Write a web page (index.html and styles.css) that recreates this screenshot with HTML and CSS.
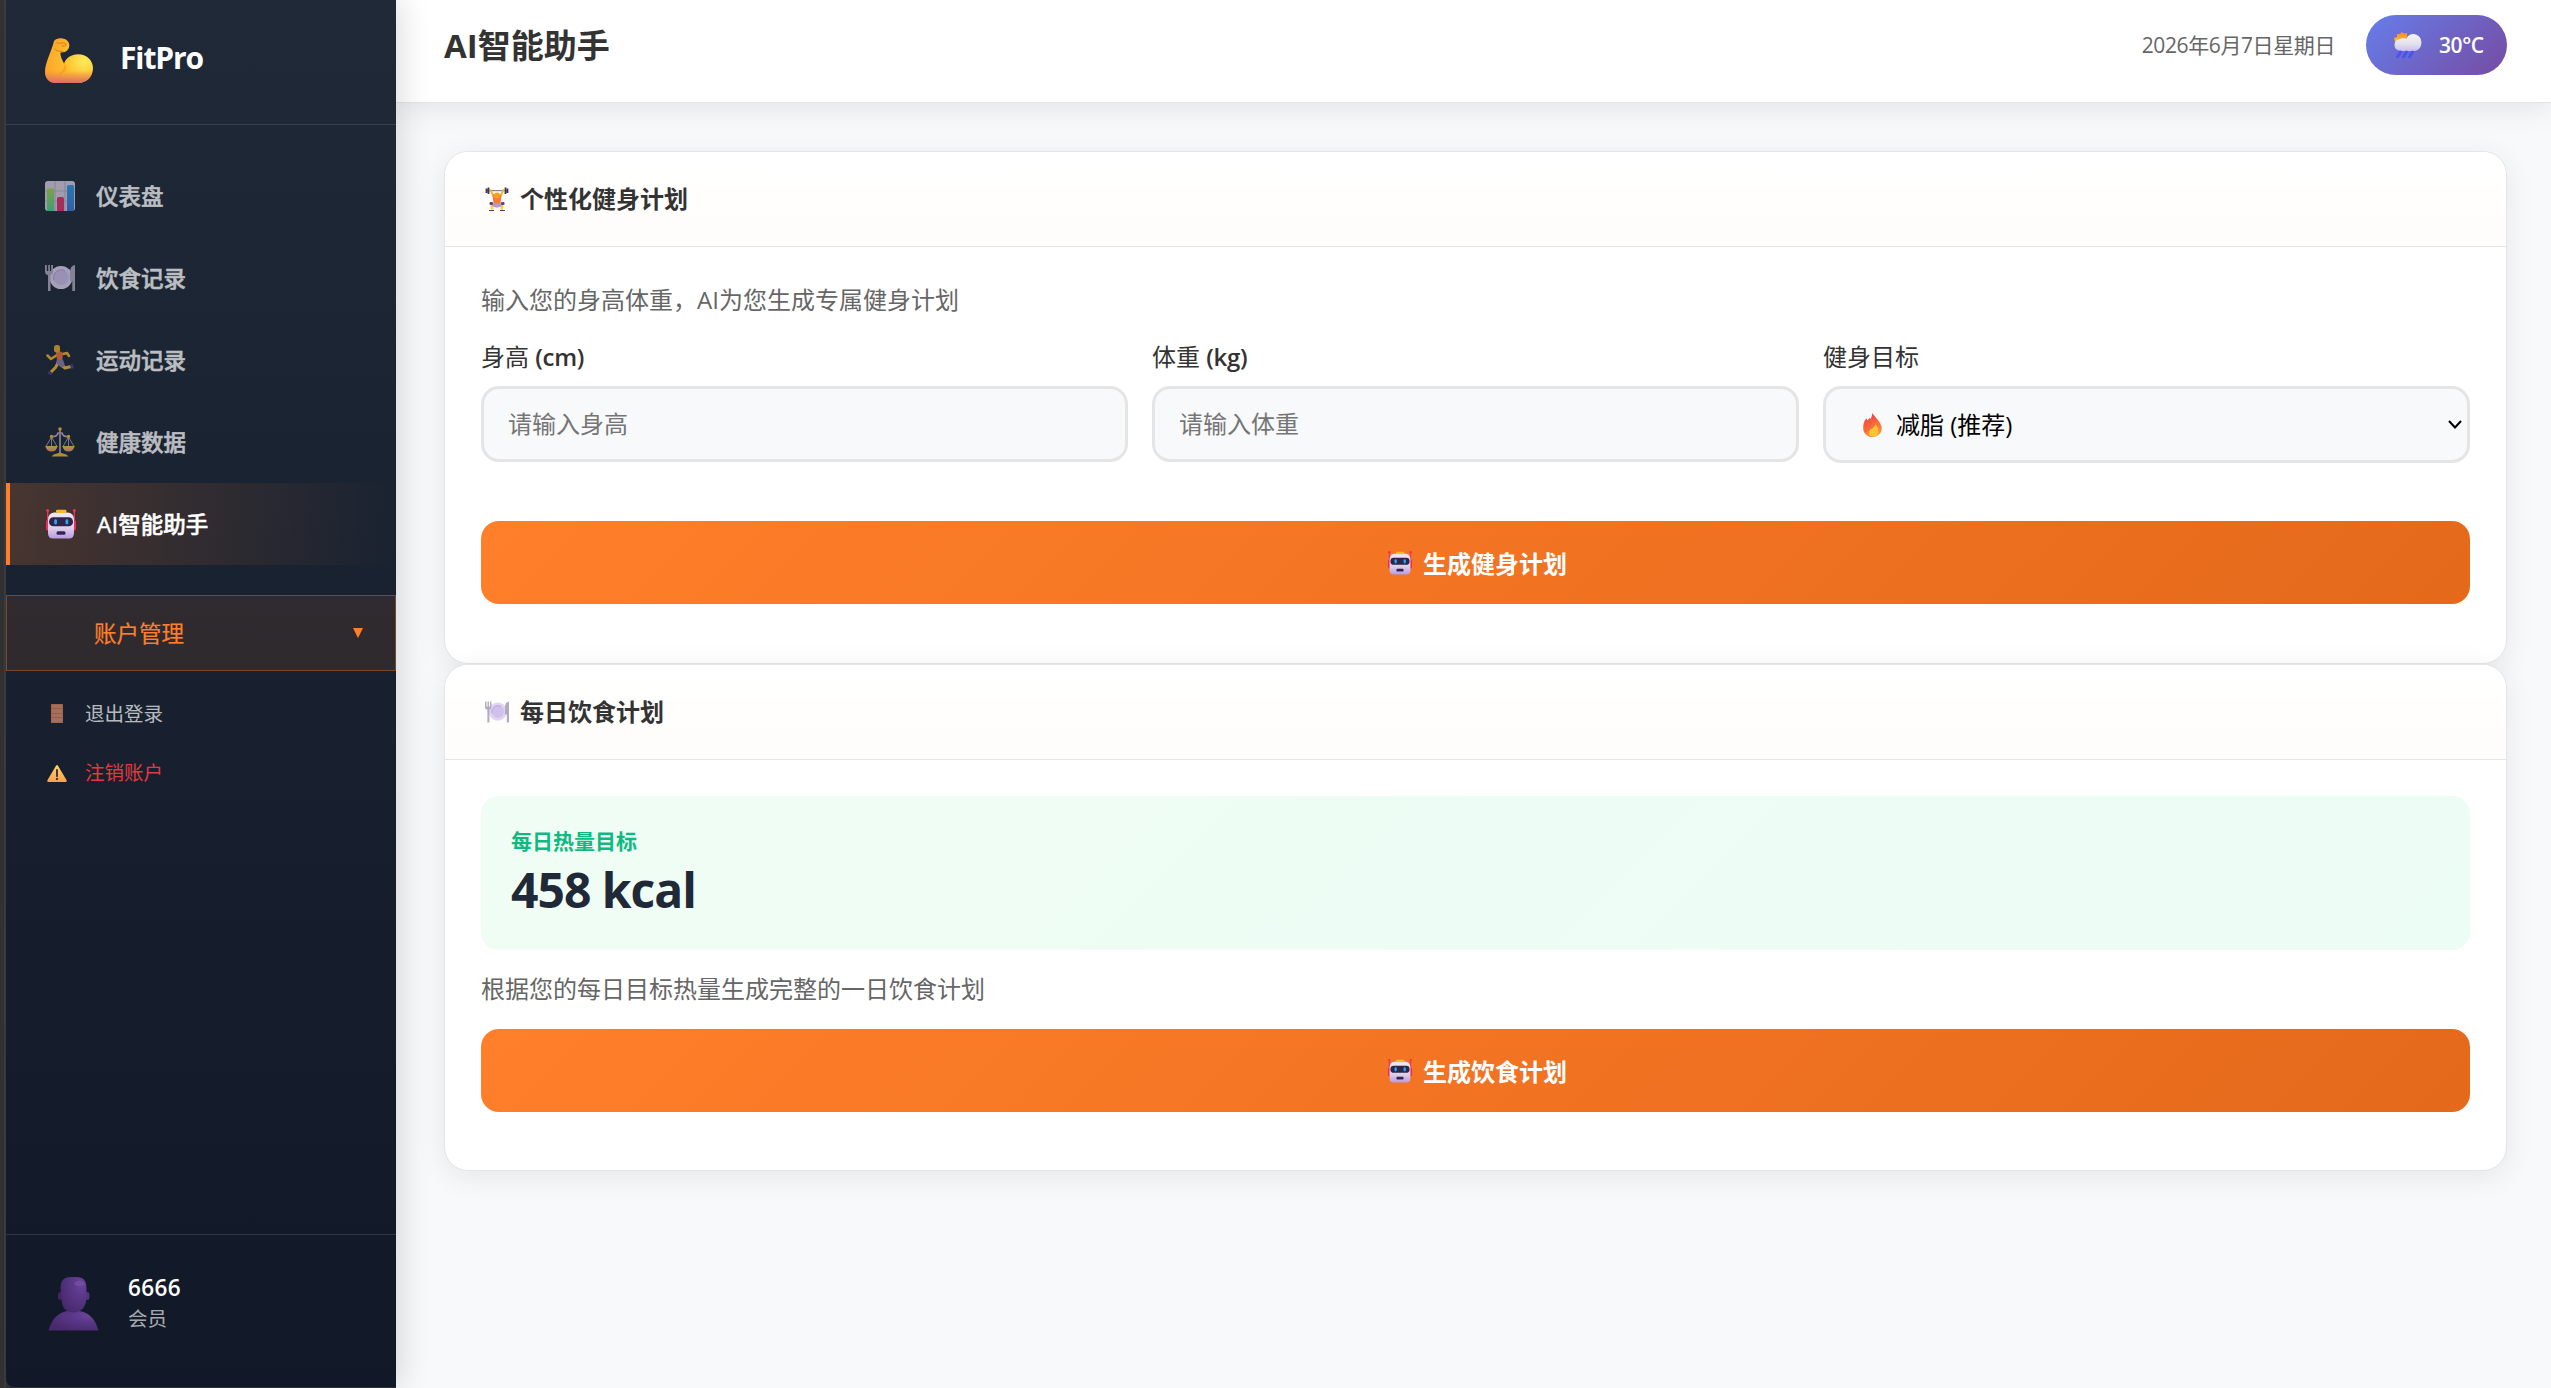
FILE: index.html
```html
<!DOCTYPE html>
<html lang="zh-CN">
<head>
<meta charset="utf-8">
<title>FitPro</title>
<link rel="stylesheet" href="styles.css">
</head>
<body>
<svg class="sprite" aria-hidden="true">
  <defs>
    <radialGradient id="gArm" cx=".82" cy=".5" r=".8"><stop offset="0" stop-color="#ffec5a"/><stop offset=".5" stop-color="#ffc02e"/><stop offset="1" stop-color="#fda52c"/></radialGradient>
    <linearGradient id="gArmLow" x1="0" y1="0" x2="0" y2="1"><stop offset=".72" stop-color="#e8785a" stop-opacity="0"/><stop offset="1" stop-color="#d96d68"/></linearGradient>
    <linearGradient id="gGreen" x1="0" y1="0" x2="0" y2="1"><stop offset="0" stop-color="#a5d64c"/><stop offset="1" stop-color="#4fd292"/></linearGradient>
    <linearGradient id="gBlue" x1="0" y1="0" x2="0" y2="1"><stop offset="0" stop-color="#2e9be6"/><stop offset="1" stop-color="#3a78d8"/></linearGradient>
    <linearGradient id="gFace" x1="0" y1="0" x2="0" y2="1"><stop offset="0" stop-color="#f0e8f4"/><stop offset=".6" stop-color="#ddd0ea"/><stop offset="1" stop-color="#b99adf"/></linearGradient>
    <linearGradient id="gFire" x1=".3" y1="0" x2=".7" y2="1"><stop offset="0" stop-color="#f2363e"/><stop offset=".55" stop-color="#f9713c"/><stop offset="1" stop-color="#ff9a3c"/></linearGradient>
    <linearGradient id="gWarn" x1="0" y1="0" x2="0" y2="1"><stop offset="0" stop-color="#ffd75c"/><stop offset="1" stop-color="#ff9f50"/></linearGradient>
    <linearGradient id="gPan" x1="0" y1="0" x2="0" y2="1"><stop offset="0" stop-color="#f5c748"/><stop offset="1" stop-color="#e8917c"/></linearGradient>
    <radialGradient id="gPerson" cx=".8" cy=".2" r=".9"><stop offset="0" stop-color="#6b4499"/><stop offset=".4" stop-color="#5a3889"/><stop offset="1" stop-color="#48296c"/></radialGradient>
    <linearGradient id="gCloud" x1="0" y1="0" x2="0" y2="1"><stop offset="0" stop-color="#f6f6f8"/><stop offset=".6" stop-color="#e2e0ea"/><stop offset="1" stop-color="#c9bdf2"/></linearGradient>
    <linearGradient id="gSun" x1="0" y1="0" x2="0" y2="1"><stop offset="0" stop-color="#f58a2a"/><stop offset="1" stop-color="#ffc83a"/></linearGradient>
    <radialGradient id="gPlate"><stop offset="0" stop-color="#d5c8ec"/><stop offset="1" stop-color="#e2d8f2"/></radialGradient>
  </defs>

  <symbol id="arm" viewBox="0 0 48 45">
    <path id="armShape" d="M9 3C11 .5 15-.3 18.500.8C22 1.500 24.500 4.500 24.300 7.500C24 11.500 21.500 14 18 14.300L15.500 14.500C15 17 16.500 21 19 25.500C21 20 26.500 16.300 33 16.300C41.500 16.300 48 22.500 48 30C48 38.500 42 45 33 45H11C4.500 45 0 40.500 0 34C0 24 6.500 14 9 3Z" fill="url(#gArm)"/>
    <path d="M19 25.500C20 28 19.500 31 13 37C20 35 24 31 19.500 25Z" fill="#f89d20" opacity=".7"/>
    <path d="M9 3C11 .5 15-.3 18.500.8C22 1.500 24.500 4.500 24.300 7.500C24 11.500 21.500 14 18 14.300L15.500 14.500C15 17 16.500 21 19 25.500C21 20 26.500 16.300 33 16.300C41.500 16.300 48 22.500 48 30C48 38.500 42 45 33 45H11C4.500 45 0 40.500 0 34C0 24 6.500 14 9 3Z" fill="url(#gArmLow)"/>
    <path d="M12 4.500C15 7 17.500 3.500 20.500 5.500C22 7 20 8.500 17 8M10 11C12 14 15 13 18 13.500" fill="none" stroke="#e58a17" stroke-width="1.300" stroke-linecap="round"/>
  </symbol>

  <symbol id="chart" viewBox="0 0 30 30">
    <rect width="30" height="30" rx="3" fill="#d9cfe2"/>
    <path d="M10 0V30M20 0V30M0 10H30M0 20H30" stroke="#b8aec4" stroke-width="1"/>
    <path d="M2 9Q2 7.500 3.500 7.500H7.500Q9 7.500 9 9V30H2Z" fill="url(#gGreen)"/>
    <path d="M12 18Q12 16 13.500 16H17.500Q19 16 19 18V30H12Z" fill="#e0316b"/>
    <path d="M22 5.500Q22 4 23.500 4H27.500Q29 4 29 5.500V30H22Z" fill="url(#gBlue)"/>
  </symbol>

  <symbol id="dish" viewBox="0 0 30 30">
    <circle cx="16" cy="14.500" r="11.500" fill="url(#gPlate)"/>
    <circle cx="16" cy="14.500" r="7.600" fill="#cfc0ec"/>
    <path d="M9 17A7.600 7.600 0 0 1 20 8" fill="none" stroke="#b9a6dc" stroke-width="1.200"/>
    <path d="M0 2V8Q0 12 3 12V28H5.500V12Q8 11.500 8 8V2H6.200V8H4.900V2H3.200V8H1.800V2Z" fill="#b3a9bf"/>
    <path d="M30 2Q25 3 25 9V18H27.300V28H30Z" fill="#b3a9bf"/>
  </symbol>

  <symbol id="runner" viewBox="0 0 30 30">
    <path d="M12 10L6 14L2.500 10.500M18 9L22 8L24 11" fill="none" stroke="#f2b62e" stroke-width="2.500" stroke-linecap="round" stroke-linejoin="round"/>
    <path d="M13 18L10.500 22.500L6 27M17 20.500L20 23L26 21.500" fill="none" stroke="#f4ba30" stroke-width="3" stroke-linejoin="round"/>
    <path d="M11 7Q15 5 18 8L17 17L12 15Z" fill="#f0703a"/>
    <path d="M12 14L18 14.500L20 21L16 22.500L11 18Z" fill="#8d7da8"/>
    <rect x="9" y="0" width="6" height="7.500" rx="2.500" fill="#edaa24"/>
    <path d="M3.500 26L8 28.500L6 30L3 28.500ZM25 20L27.500 18.500L29 23L26 24Z" fill="#4a3a92"/>
  </symbol>

  <symbol id="scale" viewBox="0 0 30 30">
    <path d="M15 2V27M6.500 9.500Q12 10 13 6H17Q18 10 23.500 9.500" fill="none" stroke="#b9a8c8" stroke-width="1.700"/>
    <path d="M6.500 10L1 19.500M6.500 10V19M6.500 10L12 19.500M23.500 10L18 19.500M23.500 10V19M23.500 10L29 19.500" stroke="#a99ab8" stroke-width="1"/>
    <path d="M.3 19H12.700Q11.500 24.500 6.500 24.500T.3 19ZM17.300 19H29.700Q28.500 24.500 23.500 24.500T17.300 19Z" fill="url(#gPan)"/>
    <circle cx="15" cy="2" r="1.800" fill="#f4b93a"/><circle cx="6.500" cy="9.500" r="1.700" fill="#f4b93a"/><circle cx="23.500" cy="9.500" r="1.700" fill="#f4b93a"/>
    <path d="M6.500 29.500Q8 27 12 26.500Q15 25 18 26.500Q22 27 23.500 29.500Z" fill="#f0b935"/>
  </symbol>

  <symbol id="robot" viewBox="0 0 30 30">
    <rect x="1" y="1" width="1.400" height="13" fill="#f2315c"/><rect x="27.600" y="1" width="1.400" height="13" fill="#f2315c"/>
    <circle cx="1.700" cy="1.600" r="1.500" fill="#f2315c"/><circle cx="28.300" cy="1.600" r="1.500" fill="#f2315c"/>
    <rect x="0" y="11" width="3.500" height="10.500" rx="1.500" fill="#ee2c5e"/><rect x="26.500" y="11" width="3.500" height="10.500" rx="1.500" fill="#ee2c5e"/>
    <path d="M8 3.500H22Q28 4 28 11V24Q28 29.500 23 29.500H7Q2 29.500 2 24V11Q2 4 8 3.500Z" fill="url(#gFace)"/>
    <rect x="10" y=".8" width="10.500" height="3.200" rx="1.400" fill="#fdb82a"/>
    <rect x="3" y="8.300" width="24" height="9" rx="4.300" fill="#2f2548"/>
    <rect x="8.200" y="10.300" width="2.800" height="5.200" rx="1.400" fill="#27a9ee"/><rect x="19.500" y="10.300" width="2.800" height="5.200" rx="1.400" fill="#27a9ee"/>
    <rect x="10.500" y="22.300" width="9" height="3.400" rx="1.500" fill="#33264e"/>
  </symbol>

  <symbol id="door" viewBox="0 0 12 19">
    <rect width="12" height="19" rx=".6" fill="#9c6650"/>
    <path d="M1 1H11V18H1Z" fill="#a86e58"/>
    <path d="M1 4.500H11M1 9.500H11M1 13.500H11" stroke="#8c5c54" stroke-width=".9"/>
  </symbol>

  <symbol id="warn" viewBox="0 0 20 17">
    <path d="M9 .8Q10-.6 11 .8L19.600 15.200Q20.200 17 18.500 17H1.500Q-.2 17 .4 15.200Z" fill="url(#gWarn)"/>
    <rect x="9" y="4" width="2" height="8" rx=".8" fill="#403852"/><circle cx="10" cy="14" r="1.200" fill="#403852"/>
  </symbol>

  <symbol id="person" viewBox="0 0 50 54">
    <ellipse cx="11.500" cy="19" rx="2" ry="4" fill="#442568"/><ellipse cx="39" cy="19" rx="2" ry="4" fill="#55347f"/>
    <path d="M0 53.500Q5 36 19 34H31Q45 36 50 53.500Z" fill="url(#gPerson)"/>
    <path d="M12 11Q12 0 22 0H28Q38 0 38 11V21Q37 35 25 35.500Q13 35 13 21Z" fill="url(#gPerson)"/>
    <ellipse cx="31" cy="6.500" rx="5" ry="2.500" fill="#7a57a6" opacity=".6"/>
  </symbol>

  <symbol id="weather" viewBox="0 0 28 26">
    <path d="M1 10L0 6L3 5L3 2L6 2L7.500 0L10 1.500L13 1L13 4L14 8L6 12Z" fill="url(#gSun)"/>
    <path d="M7 19Q0 18 .5 12.500Q1 7.500 6 7Q9 5 12.500 7Q14 2 20 2Q27 3 27.500 10.500Q27 18 21 19Z" fill="url(#gCloud)"/>
    <path d="M6.500 20L3.500 25M12.500 20L9.500 25M18.500 20L15.500 25" stroke="#4a55ee" stroke-width="3" stroke-linecap="round"/>
  </symbol>

  <symbol id="lifter" viewBox="0 0 24 24">
    <path d="M1 3.700H23" stroke="#6f6480" stroke-width="1"/>
    <path d="M1.500 1.500V6M3.500 .5V7M20.500 .5V7M22.500 1.500V6" stroke="#3f3358" stroke-width="1.800"/>
    <path d="M5.500 3L8.500 9M18.500 3L15.500 9" stroke="#f7b528" stroke-width="2" stroke-linecap="round"/>
    <path d="M7.500 8Q12 6 16.500 8L15.500 17H8.500Z" fill="#fb7a35"/>
    <circle cx="12" cy="8.500" r="3" fill="#f3a024"/>
    <path d="M7.500 16.500H16.500L18 19L13 20.500H11L6 19Z" fill="#b29ad0"/>
    <rect x="4.500" y="15" width="3.500" height="3" rx="1" fill="#5b4487"/><rect x="16" y="15" width="3.500" height="3" rx="1" fill="#5b4487"/>
    <path d="M6.500 18.500L7.500 22.500M17.500 18.500L16.500 22.500" stroke="#ffcf3a" stroke-width="2.600"/>
    <path d="M4 23.500H9M15 23.500H20" stroke="#4c3a78" stroke-width="1.200"/>
  </symbol>

  <symbol id="fire" viewBox="0 0 19 24">
    <path d="M9.500 0C10.500 3 17 7.500 18.700 14C19.500 20 15 24 9.500 24C4 24 0 20 .2 14.500C.3 10 2 6.500 3.500 5.500L4.500 7.500L6.500 5L7.500 6C8.500 4.500 9 2 9.500 0Z" fill="url(#gFire)"/>
    <path d="M3 19C1.500 14 4.500 10.500 5.500 8M5.500 18C4.500 14 8 12 8.500 9" fill="none" stroke="#e2603a" stroke-width="1"/>
    <path d="M12.500 11C16.500 15.500 17 23 10.500 23.500C5 23.500 4.500 18.500 7.500 16.500C9.500 15.500 12 14 12.500 11Z" fill="#ffc531"/>
  </symbol>
</svg>

<div class="app">
  <div class="edge"></div>
  <aside class="sidebar">
    <div class="brand"><svg class="brand-icon"><use href="#arm"/></svg><span>FitPro</span></div>
    <nav class="nav">
      <a class="nav-item"><svg class="nav-icon"><use href="#chart"/></svg><span>仪表盘</span></a>
      <a class="nav-item"><svg class="nav-icon"><use href="#dish"/></svg><span>饮食记录</span></a>
      <a class="nav-item"><svg class="nav-icon"><use href="#runner"/></svg><span>运动记录</span></a>
      <a class="nav-item"><svg class="nav-icon"><use href="#scale"/></svg><span>健康数据</span></a>
      <a class="nav-item active"><svg class="nav-icon"><use href="#robot"/></svg><span><span class="ai">AI</span>智能助手</span></a>
    </nav>
    <div class="account"><span>账户管理</span><i class="caret"></i></div>
    <div class="submenu">
      <a class="sub-item"><svg class="door"><use href="#door"/></svg><span>退出登录</span></a>
      <a class="sub-item danger"><svg class="warn"><use href="#warn"/></svg><span>注销账户</span></a>
    </div>
    <div class="user">
      <svg class="avatar"><use href="#person"/></svg>
      <div><div class="user-name">6666</div><div class="user-role">会员</div></div>
    </div>
  </aside>

  <main class="main">
    <header class="topbar">
      <h1><span class="ai">AI</span>智能助手</h1>
      <div class="top-right">
        <span class="date">2026年6月7日星期日</span>
        <div class="weather"><svg class="weather-icon"><use href="#weather"/></svg><span>30°C</span></div>
      </div>
    </header>
    <div class="content">
      <section class="card">
        <div class="card-head"><svg class="icon24"><use href="#lifter"/></svg><h2>个性化健身计划</h2></div>
        <div class="card-body">
          <p class="hint">输入您的身高体重，<span class="ai">AI</span>为您生成专属健身计划</p>
          <div class="form">
            <div class="field"><label>身高 <span class="unit">(cm)</span></label><input type="text" placeholder="请输入身高"></div>
            <div class="field"><label>体重 <span class="unit">(kg)</span></label><input type="text" placeholder="请输入体重"></div>
            <div class="field"><label>健身目标</label>
              <div class="select"><svg class="fire"><use href="#fire"/></svg><span>减脂 (推荐)</span><svg class="chevron" viewBox="0 0 14 9"><path d="M1 1L7 7.500L13 1"/></svg></div>
            </div>
          </div>
          <button class="btn"><svg class="icon24"><use href="#robot"/></svg><span>生成健身计划</span></button>
        </div>
      </section>
      <section class="card">
        <div class="card-head"><svg class="icon24"><use href="#dish"/></svg><h2>每日饮食计划</h2></div>
        <div class="card-body">
          <div class="goal"><div class="goal-label">每日热量目标</div><div class="goal-value">458 kcal</div></div>
          <p class="hint diet">根据您的每日目标热量生成完整的一日饮食计划</p>
          <button class="btn"><svg class="icon24"><use href="#robot"/></svg><span>生成饮食计划</span></button>
        </div>
      </section>
    </div>
  </main>
</div>
</body>
</html>
```
FILE: styles.css
```css
* { box-sizing: border-box; margin: 0; padding: 0; }

body {
  font-family: "Open Sans", "Noto Sans CJK SC", sans-serif;
  color: #333;
  background: #f8f9fb;
  overflow: hidden;
}

svg { display: block; flex: none; }
.sprite { position: absolute; width: 0; height: 0; }

.app { display: flex; height: 1388px; background: #333; }
.edge { width: 6px; background: linear-gradient(90deg, #333 4px, #3d3d3d 4px); }

/* Sidebar */
.sidebar {
  position: relative;
  z-index: 2;
  width: 390px;
  height: 1387px;
  display: flex;
  flex-direction: column;
  color: #fff;
  background: linear-gradient(180deg, #1f2937, #111827);
  box-shadow: 6px 0 30px rgba(0, 0, 0, .13);
  border-bottom-left-radius: 8px;
}
.brand {
  height: 125px;
  display: flex;
  align-items: center;
  gap: 27px;
  padding: 0 39px 9px;
  border-bottom: 1px solid rgba(255, 255, 255, .12);
  font-size: 30px;
  font-weight: 700;
  line-height: 40px;
  letter-spacing: -1.1px;
}
.brand-icon { width: 48px; height: 45px; margin-top: 6px; }
.nav { padding: 30px 0; }
.nav-item {
  height: 82px;
  display: flex;
  align-items: center;
  gap: 21px;
  padding-left: 39px;
  font-size: 22.5px;
  font-weight: 500;
  -webkit-text-stroke: .5px currentColor;
  opacity: .7;
}
.nav-item > span { padding-bottom: 1px; }
.nav-icon { width: 30px; height: 30px; }
.nav-item.active {
  opacity: 1;
  padding-left: 36px;
  border-left: 4px solid #ff7f2a;
  background: linear-gradient(90deg, rgba(255, 127, 42, .2), rgba(255, 127, 42, 0));
}
.nav-item .ai { letter-spacing: .4px; }
.account {
  height: 76px;
  display: flex;
  align-items: center;
  justify-content: space-between;
  padding: 0 32px 0 87px;
  border: 1px solid rgba(255, 127, 42, .35);
  background: rgba(255, 127, 42, .1);
  color: #ff7f2a;
  font-size: 22.5px;
  -webkit-text-stroke: .2px currentColor;
}
.account > span { padding-bottom: 1px; }
.caret { border: 5.500px solid transparent; border-top: 10px solid #ff7f2a; border-bottom: 0; }
.submenu { padding-top: 12px; }
.sub-item {
  height: 59px;
  display: flex;
  align-items: center;
  padding-left: 41px;
  font-size: 19.5px;
  color: rgba(255, 255, 255, .7);
}
.sub-item.danger { color: #e03a3e; }
.door { width: 12px; height: 19px; margin: 1px 22px 0 4px; }
.warn { width: 20px; height: 17px; margin: 4px 18px 0 0; }
.user {
  margin-top: auto;
  height: 153px;
  display: flex;
  align-items: center;
  gap: 29px;
  padding: 0 42px 16px;
  border-top: 1px solid rgba(255, 255, 255, .12);
}
.avatar { width: 51px; height: 54px; margin-top: 2px; }
.user-name { font-size: 22.5px; font-weight: 600; line-height: 32px; letter-spacing: .4px; }
.user-role { font-size: 19.5px; line-height: 30px; color: rgba(255, 255, 255, .65); }

/* Page */
.main { flex: 1; background: #f8f9fb; }
.topbar {
  height: 103px;
  display: flex;
  justify-content: space-between;
  padding: 15px 44px 0 48px;
  background: #fff;
  border-bottom: 1px solid #e5e5e5;
  box-shadow: 0 3px 30px rgba(0, 0, 0, .1);
}
h1 { font-size: 33px; line-height: 62px; font-weight: 600; }
h1 .ai { font-weight: 700; }
.top-right { display: flex; align-items: flex-start; gap: 31px; }
.date { font-size: 21px; line-height: 61px; color: #666; letter-spacing: -.4px; }
.weather {
  width: 141px;
  height: 60px;
  display: flex;
  align-items: center;
  gap: 17px;
  padding-left: 28px;
  border-radius: 30px;
  background: linear-gradient(135deg, #667eea, #764ba2);
  color: #fff;
  font-size: 21px;
  font-weight: 600;
  letter-spacing: -.4px;
}
.weather-icon { width: 28px; height: 26px; }

.content { padding: 48px 44px 0 48px; }
.card {
  border: 1px solid #e5e5e5;
  border-radius: 24px;
  background: #fff;
  box-shadow: 0 6px 30px rgba(0, 0, 0, .08);
  height: 513px;
  overflow: hidden;
}
.card + .card { height: 507px; }
.card-head {
  height: 95px;
  display: flex;
  align-items: center;
  gap: 11px;
  padding: 0 40px;
  border-bottom: 1px solid #e5e5e5;
  background: linear-gradient(180deg, #fff, #fffdfb);
}
.icon24 { width: 24px; height: 24px; }
h2 { font-size: 24px; font-weight: 600; line-height: 36px; }
.card-body { padding: 35px 36px; }
.hint { font-size: 24px; line-height: 36px; color: #666; }
.form { display: grid; grid-template-columns: repeat(3, 1fr); gap: 24px; margin-top: 21px; margin-bottom: 58px; }
label { display: block; font-size: 24px; line-height: 36px; margin-bottom: 11px; }
.unit { font-weight: 600; letter-spacing: -.3px; }
input, .select {
  width: 100%;
  height: 76px;
  border: 3px solid #e5e5e5;
  border-radius: 18px;
  background: #f8f9fb;
  font-family: inherit;
  font-size: 24px;
  padding: 0 24px 2px;
  display: block;
}
input::placeholder { color: #757575; }
.select { height: 77px; display: flex; align-items: center; padding: 0 5px 0 37px; color: #000; }
.select > span { padding-bottom: 3px; }
.fire { width: 19px; height: 24px; margin-right: 14px; }
.chevron { width: 14px; height: 9px; margin-left: auto; fill: none; stroke: #000; stroke-width: 2; }
.btn {
  width: 100%;
  height: 83px;
  display: flex;
  align-items: center;
  justify-content: center;
  gap: 11px;
  padding-left: 4px;
  border: 0;
  border-radius: 18px;
  background: linear-gradient(135deg, #ff7f2a, #e5691b);
  color: #fff;
  font-family: inherit;
  font-size: 24px;
  font-weight: 600;
}
.btn > span { padding-bottom: 1px; }
.goal {
  height: 154px;
  margin-top: 1px;
  padding: 29px 30px;
  border-radius: 18px;
  background: linear-gradient(135deg, #f0fdf4, #ecfdf5);
}
.goal-label { font-size: 21px; line-height: 32px; font-weight: 600; color: #10b981; }
.goal-value { font-size: 48px; line-height: 66px; font-weight: 700; color: #1f2937; letter-spacing: -1px; }
.hint.diet { margin: 21px 0 22px; }
```
